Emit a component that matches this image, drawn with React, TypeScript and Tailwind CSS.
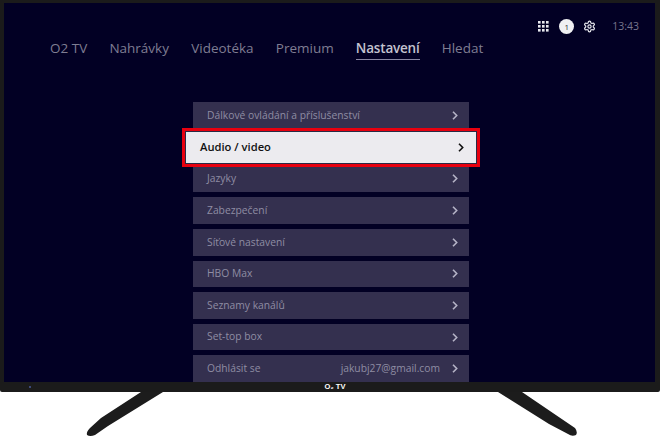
import React from "react";

const items = [
  "Dálkové ovládání a příslušenství",
  "Audio / video",
  "Jazyky",
  "Zabezpečení",
  "Síťové nastavení",
  "HBO Max",
  "Seznamy kanálů",
  "Set-top box",
  "Odhlásit se",
];
const nav = ["O2 TV", "Nahrávky", "Videotéka", "Premium", "Nastavení", "Hledat"];

function Chevron({ dark }: { dark?: boolean }) {
  return (
    <svg width="6" height="9" viewBox="0 0 6 9" fill="none" stroke={dark ? "#111" : "#b5b3c6"} strokeWidth="1.6">
      <path d="M1 0.8 L4.7 4.5 L1 8.2" />
    </svg>
  );
}

function Grid() {
  return (
    <svg width="11" height="11" viewBox="0 0 11 11" fill="#e8e8ee">
      {[0, 4, 8].flatMap((y) =>
        [0, 4, 8].map((x) => <rect key={`${x}-${y}`} x={x} y={y} width="2.6" height="2.6" />)
      )}
    </svg>
  );
}

function Gear() {
  return (
    <svg width="13" height="13" viewBox="0 0 24 24" fill="none" stroke="#e8e8ee" strokeWidth="2.2" strokeLinejoin="round">
      <path d="M12.22 2h-.44a2 2 0 0 0-2 2v.18a2 2 0 0 1-1 1.73l-.43.25a2 2 0 0 1-2 0l-.15-.08a2 2 0 0 0-2.73.73l-.22.38a2 2 0 0 0 .73 2.73l.15.1a2 2 0 0 1 1 1.72v.51a2 2 0 0 1-1 1.74l-.15.09a2 2 0 0 0-.73 2.73l.22.38a2 2 0 0 0 2.73.73l.15-.08a2 2 0 0 1 2 0l.43.25a2 2 0 0 1 1 1.73V20a2 2 0 0 0 2 2h.44a2 2 0 0 0 2-2v-.18a2 2 0 0 1 1-1.73l.43-.25a2 2 0 0 1 2 0l.15.08a2 2 0 0 0 2.73-.73l.22-.39a2 2 0 0 0-.73-2.73l-.15-.08a2 2 0 0 1-1-1.74v-.5a2 2 0 0 1 1-1.74l.15-.09a2 2 0 0 0 .73-2.73l-.22-.38a2 2 0 0 0-2.73-.73l-.15.08a2 2 0 0 1-2 0l-.43-.25a2 2 0 0 1-1-1.73V4a2 2 0 0 0-2-2z" />
      <circle cx="12" cy="12" r="3" />
    </svg>
  );
}

export default function App() {
  return (
    <div className="w-[660px] h-[437px] bg-white flex flex-col overflow-hidden font-['Open_Sans',sans-serif]">
      <div className="h-[392px] shrink-0 bg-[#1b1b1b] flex flex-col pt-[3px] pl-[4px] pr-[5px] rounded-b-[2px]">
        <div className="h-[379px] shrink-0 bg-[#020024] flex flex-col overflow-hidden">
          <div className="flex justify-end items-center h-[15px] mt-[16px] pr-[16px] shrink-0">
            <Grid />
            <div className="ml-[10px] w-[15px] h-[15px] rounded-full bg-[#f0f0f2] flex items-center justify-center text-[8px] leading-none text-[#333]">1</div>
            <div className="ml-[9px]"><Gear /></div>
            <div className="ml-[16px] text-[10.5px] leading-none text-[#77758c]">13:43</div>
          </div>
          <div className="flex ml-[46px] mt-[4px] gap-[22.2px] text-[13.5px] leading-[20px] text-[#7f7d92] shrink-0">
            {nav.map((n) =>
              n === "Nastavení" ? (
                <div key={n} className="text-[#c4c3d0] font-semibold border-b border-[#8a88a4] pb-[1px] tracking-[-0.2px]">{n}</div>
              ) : (
                <div key={n}>{n}</div>
              )
            )}
          </div>
          <div className="ml-[189px] w-[276px] mt-[42px] flex flex-col gap-[5px] shrink-0">
            {items.map((t, i) =>
              i === 1 ? (
                <div key={t} className="relative z-10 -mx-[11px] -my-[6px] h-[39px] border-[3px] border-[#e8000f] bg-[#2a2a44] p-[1px] shrink-0">
                  <div className="h-full bg-[#ecebef] flex items-center justify-between pl-[14px] pr-[12px] text-[11.2px] font-semibold text-[#111]">
                    <span>{t}</span>
                    <Chevron dark />
                  </div>
                </div>
              ) : (
                <div key={t} className="h-[26.65px] shrink-0 bg-[#34304f] flex items-center justify-between pl-[14px] pr-[11px] text-[10.3px] text-[#8f8da3]">
                  <span>{t}</span>
                  <span className="flex items-center gap-[12px]">
                    {t === "Odhlásit se" && <span>jakubj27@gmail.com</span>}
                    <Chevron />
                  </span>
                </div>
              )
            )}
          </div>
        </div>
        <div className="flex-1 flex items-center justify-center relative pl-[11px]">
          <span className="text-[7.5px] leading-none font-bold text-white font-['Liberation_Sans',sans-serif]">O₂ TV</span>
          <span className="absolute left-[25px] top-[4px] w-[2px] h-[2px] rounded-full bg-[#4a5a9a]" />
        </div>
      </div>
      <svg width="660" height="45" viewBox="0 0 660 45" className="shrink-0 block">
        <path d="M141 0 L163 0 L108 34 L95 43 Q90 45 87 43 Q86 40 90 36 L101 26 Z" fill="#1c1c1c" />
        <path d="M498 0 L522 0 L575 36 Q578 40 576 43 Q572 45 568 42 L549 32 Z" fill="#1c1c1c" />
      </svg>
    </div>
  );
}
